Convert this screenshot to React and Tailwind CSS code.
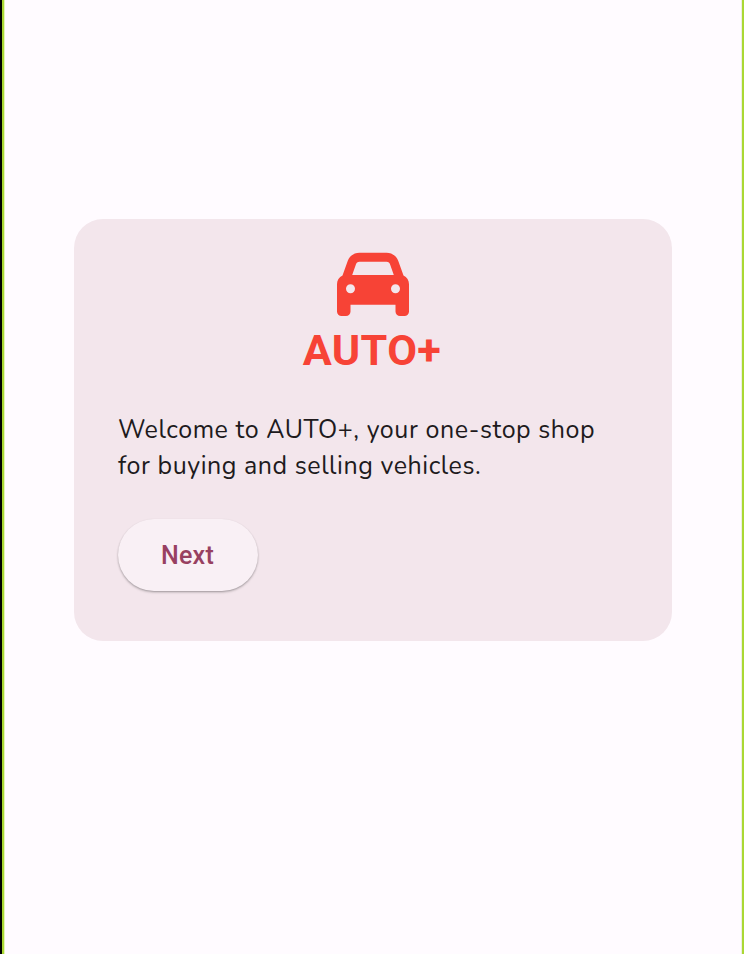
export default function App() {
  return (
    <main className="flex h-[954px] w-[744px] border-l-2 border-black bg-[#fffbff]">
      <div className="flex flex-1 flex-col items-center border-x-2 border-[#aad834] pt-[219px] shadow-[inset_1px_0_0_#e6f5b8,inset_-1px_0_0_#eeeee0]">
        <section className="flex h-[422px] w-[598px] flex-col rounded-[29px] bg-[#f3e6ec] px-11 pt-[33px]">
          <svg viewBox="0 0 72 64" className="h-16 w-[72px] shrink-0 self-center fill-[#f74336]" aria-hidden="true">
            <path
              fillRule="evenodd"
              d="M22.5.7h27c5.3 0 10 3.2 11.8 8.2L66.5 23.6C70 25.2 72 28.6 72 32.2V59.5a4.5 4.5 0 0 1-4.5 4.5H63a4.5 4.5 0 0 1-4.5-4.5V52.7h-45v6.8A4.5 4.5 0 0 1 9 64H4.5A4.5 4.5 0 0 1 0 59.5V32.2c0-3.6 2-7 5.5-8.6L10.7 8.9C12.5 3.9 17.2.7 22.5.7zM15.2 23h41.6L53.2 12.7A4 4 0 0 0 49.5 9.7h-27a4 4 0 0 0-3.7 3zM13.5 32.2a4.5 4.5 0 1 0 0 9a4.5 4.5 0 1 0 0-9zM58.5 32.2a4.5 4.5 0 1 0 0 9a4.5 4.5 0 1 0 0-9z"
            />
          </svg>
          <h1 className="mt-[10px] -translate-x-px self-center font-['Roboto',sans-serif] text-[43.2px] font-bold leading-[50px] tracking-[0.4px] text-[#f74336]">AUTO+</h1>
          <p className="mt-[36px] whitespace-nowrap font-['Nunito','Open_Sans',sans-serif] text-[25px] leading-[36px] tracking-[0.56px] text-[#201a1c]">
            Welcome to AUTO+, your one-stop shop<br />for buying and selling vehicles.
          </p>
          <button className="mt-[35px] h-[72px] w-[140px] rounded-full bg-[#f9f0f5] pt-px pr-px font-['Roboto',sans-serif] text-[25px] font-medium tracking-[0.25px] text-[#984061] shadow-[0_1px_2px_rgba(0,0,0,0.28),0_2px_3px_rgba(0,0,0,0.08)]">Next</button>
        </section>
      </div>
    </main>
  );
}
